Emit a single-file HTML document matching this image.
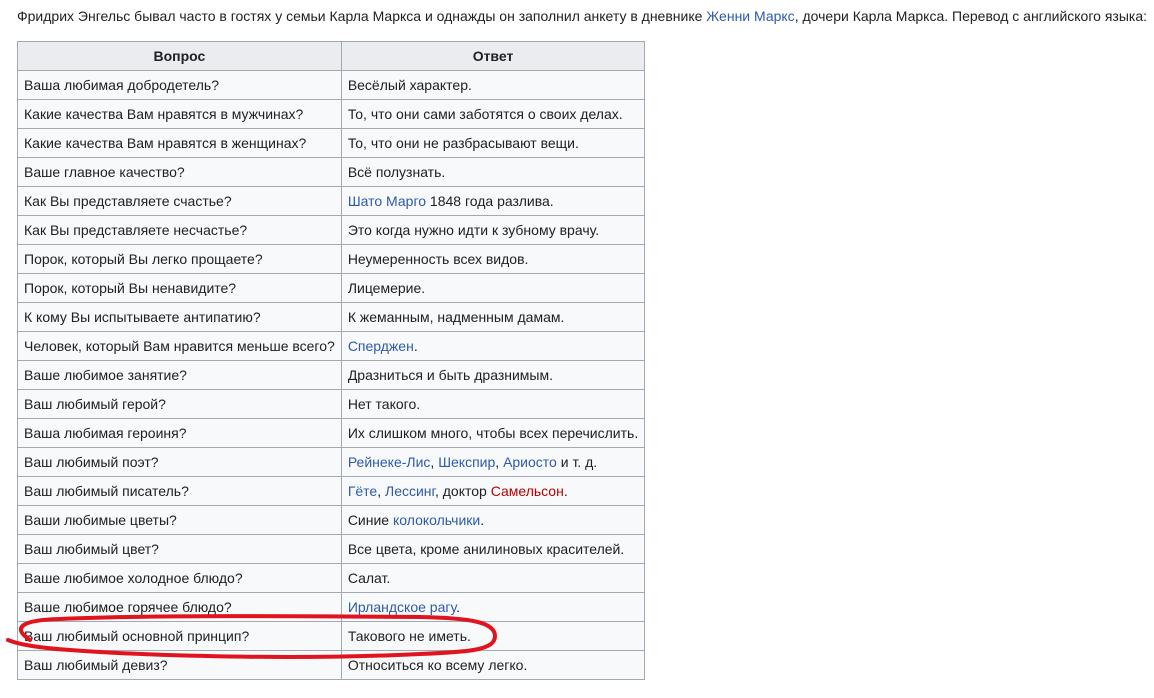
<!DOCTYPE html>
<html><head><meta charset="utf-8"><style>
body{margin:0;background:#fff;width:1154px;height:698px;overflow:hidden;position:relative;font-family:"Liberation Sans",Arial,sans-serif;color:#202122;font-size:14px}
p{position:absolute;left:17px;top:6px;margin:0;white-space:nowrap;line-height:20px}
a{color:#2f5aa8;text-decoration:none}
a.r{color:#ba0000}
table{position:absolute;left:17px;top:41px;border-collapse:collapse;background:#f8f9fa;width:625px}
td,th{border:1px solid #a2a9b1;height:29px;padding:0 6px;line-height:18px;white-space:nowrap;box-sizing:border-box}
th{background:#eaecf0;font-weight:bold;text-align:center}
td:first-child,th:first-child{width:322px}
svg{position:absolute;left:0;top:0}
</style></head><body>
<p>Фридрих Энгельс бывал часто в гостях у семьи Карла Маркса и однажды он заполнил анкету в дневнике <a>Женни Маркс</a>, дочери Карла Маркса. Перевод с английского языка:</p>
<table>
<tr><th>Вопрос</th><th>Ответ</th></tr>
<tr><td>Ваша любимая добродетель?</td><td>Весёлый характер.</td></tr>
<tr><td>Какие качества Вам нравятся в мужчинах?</td><td>То, что они сами заботятся о своих делах.</td></tr>
<tr><td>Какие качества Вам нравятся в женщинах?</td><td>То, что они не разбрасывают вещи.</td></tr>
<tr><td>Ваше главное качество?</td><td>Всё полузнать.</td></tr>
<tr><td>Как Вы представляете счастье?</td><td><a>Шато Марго</a> 1848 года разлива.</td></tr>
<tr><td>Как Вы представляете несчастье?</td><td>Это когда нужно идти к зубному врачу.</td></tr>
<tr><td>Порок, который Вы легко прощаете?</td><td>Неумеренность всех видов.</td></tr>
<tr><td>Порок, который Вы ненавидите?</td><td>Лицемерие.</td></tr>
<tr><td>К кому Вы испытываете антипатию?</td><td>К жеманным, надменным дамам.</td></tr>
<tr><td>Человек, который Вам нравится меньше всего?</td><td><a>Сперджен</a>.</td></tr>
<tr><td>Ваше любимое занятие?</td><td>Дразниться и быть дразнимым.</td></tr>
<tr><td>Ваш любимый герой?</td><td>Нет такого.</td></tr>
<tr><td>Ваша любимая героиня?</td><td>Их слишком много, чтобы всех перечислить.</td></tr>
<tr><td>Ваш любимый поэт?</td><td><a>Рейнеке-Лис</a>, <a>Шекспир</a>, <a>Ариосто</a> и т. д.</td></tr>
<tr><td>Ваш любимый писатель?</td><td><a>Гёте</a>, <a>Лессинг</a>, доктор <a class="r">Самельсон</a>.</td></tr>
<tr><td>Ваши любимые цветы?</td><td>Синие <a>колокольчики</a>.</td></tr>
<tr><td>Ваш любимый цвет?</td><td>Все цвета, кроме анилиновых красителей.</td></tr>
<tr><td>Ваше любимое холодное блюдо?</td><td>Салат.</td></tr>
<tr><td>Ваше любимое горячее блюдо?</td><td><a>Ирландское рагу</a>.</td></tr>
<tr><td>Ваш любимый основной принцип?</td><td>Такового не иметь.</td></tr>
<tr><td>Ваш любимый девиз?</td><td>Относиться ко всему легко.</td></tr>
</table>
<svg width="1154" height="698"><path d="M30,640 C12,628 20,620 60,619 C150,615 300,616 420,617 C470,618 495,622 495,636 C495,650 470,652 420,654 C300,660 150,656 70,650 C40,648 20,645 8,640" fill="none" stroke="#e0141e" stroke-width="4" stroke-linecap="round"/></svg>
</body></html>
